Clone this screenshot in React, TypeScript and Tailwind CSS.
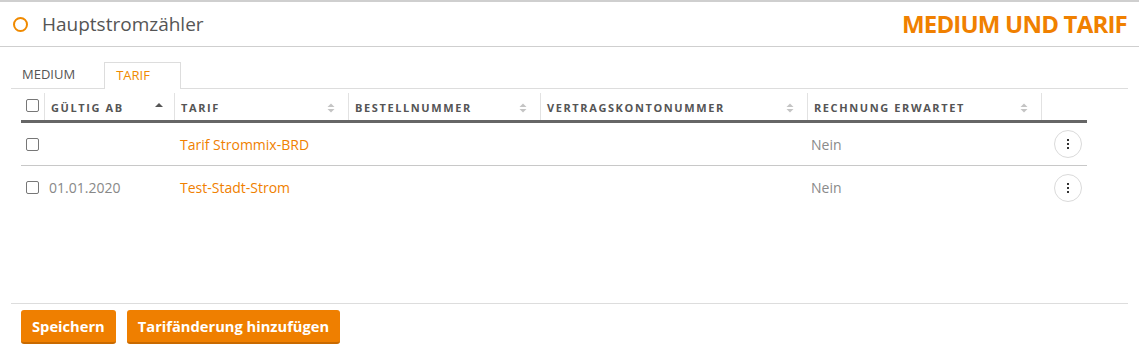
import React from 'react';

const cols = [
  { label: 'Gültig ab', sort: 'up' },
  { label: 'Tarif', sort: 'both' },
  { label: 'Bestellnummer', sort: 'both' },
  { label: 'Vertragskontonummer', sort: 'both' },
  { label: 'Rechnung erwartet', sort: 'both' },
];

const rows = [
  { date: '', tarif: 'Tarif Strommix-BRD', invoice: 'Nein' },
  { date: '01.01.2020', tarif: 'Test-Stadt-Strom', invoice: 'Nein' },
];

const grid = 'grid grid-cols-[23px_130px_174px_192px_267px_234px_46px]';

function SortIcon({ mode }: { mode: string }) {
  if (mode === 'up') {
    return (
      <svg width="10" height="10" viewBox="0 0 10 10" className="mr-[10px] mb-[6px]">
        <path d="M1 7 L5 3 L9 7 Z" fill="#555" />
      </svg>
    );
  }
  return (
    <svg width="10" height="12" viewBox="0 0 10 12" className="mr-[12px]">
      <path d="M1.5 5 L5 1.5 L8.5 5 Z" fill="#c4c4c4" />
      <path d="M1.5 7 L5 10.5 L8.5 7 Z" fill="#c4c4c4" />
    </svg>
  );
}

function Checkbox() {
  return <span className="block w-[13px] h-[13px] border border-[#777] rounded-[2px] bg-white" />;
}

export default function App() {
  return (
    <div className="w-[1139px] h-[355px] bg-white font-['Open_Sans',sans-serif] text-[#555]">
      <div className="h-[47px] border-t-2 border-b border-[#cfcfcf] flex items-center justify-between pl-[13px] pr-[12px]">
        <div className="flex items-center">
          <span className="block w-[15px] h-[15px] rounded-full border-2 border-[#f08a00]" />
          <span className="ml-[14px] text-[19px] text-[#555] leading-none">Hauptstromzähler</span>
        </div>
        <span className="text-[24px] font-bold text-[#f08000] tracking-[-0.8px] leading-none">MEDIUM UND TARIF</span>
      </div>

      <div className="px-[11px]">
        <div className="mt-[15px] flex items-end border-b border-[#ddd] h-[27px]">
          <div className="h-[26px] px-[11px] flex items-center text-[13px] text-[#555]">MEDIUM</div>
          <div className="h-[27px] w-[77px] ml-[18px] -mb-px border border-b-0 border-[#ddd] bg-white flex items-center pl-[11px] text-[13px] text-[#f08a00]">
            TARIF
          </div>
        </div>

        <div className="ml-[10px] w-[1066px]">
          <div className={`${grid} h-[34px] border-b-[3px] border-[#666]`}>
            <div className="flex items-center justify-center pt-[2px]">
              <Checkbox />
            </div>
            {cols.map((c) => (
              <div key={c.label} className="flex items-center justify-between border-l border-[#e2e2e2] mt-[4px] pl-[6px] pt-[3px]">
                <span className="uppercase font-bold text-[11px] tracking-[1.6px] text-[#555]">{c.label}</span>
                <SortIcon mode={c.sort} />
              </div>
            ))}
            <div className="border-l border-[#e2e2e2] mt-[4px]" />
          </div>

          {rows.map((r, i) => (
            <div key={i} className={`${grid} h-[43px] ${i === 0 ? 'border-b border-[#c8c8c8]' : ''} text-[14px]`}>
              <div className="flex items-center justify-center">
                <Checkbox />
              </div>
              <div className="flex items-center pl-[5px] text-[#888]">{r.date}</div>
              <div className="flex items-center pl-[6px] text-[#f08000]">{r.tarif}</div>
              <div />
              <div />
              <div className="flex items-center pl-[4px] text-[#8a8a8a]">{r.invoice}</div>
              <div className="flex items-center justify-end pr-[5px]">
                <button className="w-[28px] h-[28px] rounded-full border border-[#dadada] bg-white flex flex-col items-center justify-center gap-[2px]">
                  <span className="block w-[2px] h-[2px] bg-[#333]" />
                  <span className="block w-[2px] h-[2px] bg-[#333]" />
                  <span className="block w-[2px] h-[2px] bg-[#333]" />
                </button>
              </div>
            </div>
          ))}
        </div>

        <div className="mt-[94px] border-t border-[#ddd] pt-[6px] pl-[10px] flex gap-[11px]">
          <button className="h-[34px] px-[11px] rounded-[3px] bg-[#ef7f00] border-b-2 border-[#c96a00] text-white font-bold text-[14.7px]">
            Speichern
          </button>
          <button className="h-[34px] px-[11px] rounded-[3px] bg-[#ef7f00] border-b-2 border-[#c96a00] text-white font-bold text-[14.7px]">
            Tarifänderung hinzufügen
          </button>
        </div>
      </div>
    </div>
  );
}
